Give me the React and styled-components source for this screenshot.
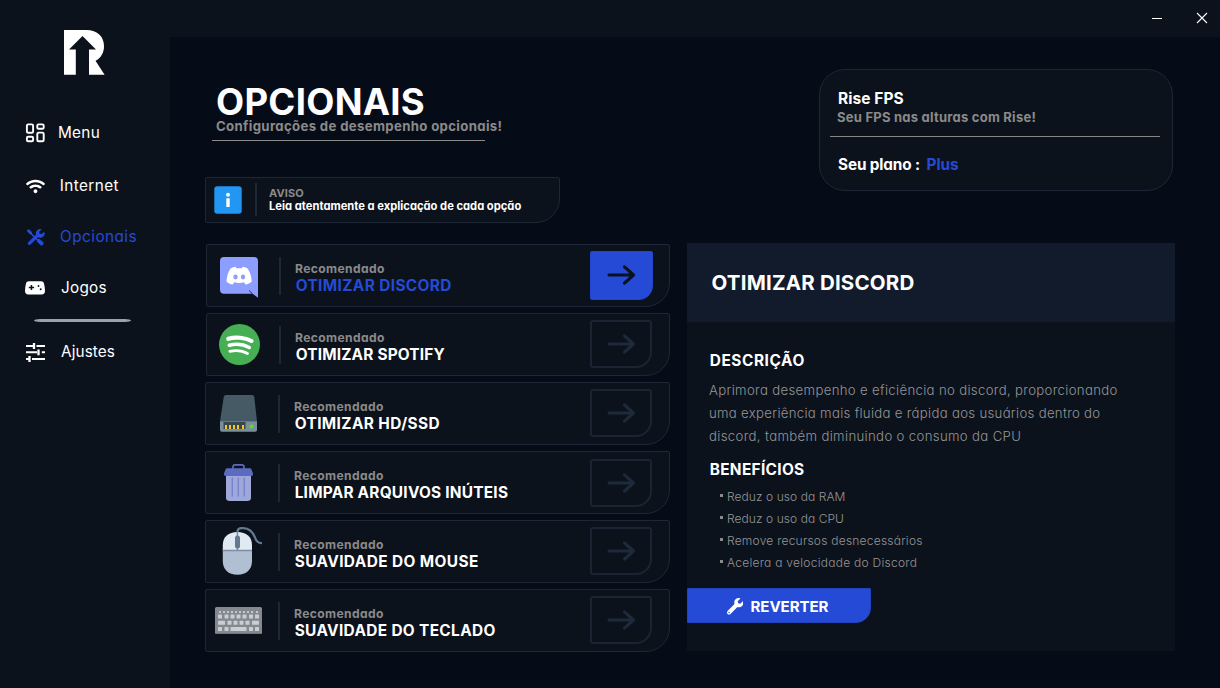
import React from 'react';
import styled, { createGlobalStyle, css } from 'styled-components';
import { FaWifi, FaWrench } from 'react-icons/fa';

const color = {
  page: '#060c17',
  panel: '#0c121c',
  header: '#121b2b',
  line: '#1d2736',
  blue: '#254ad6',
  grey: '#8a8a8a',
  soft: '#949596',
  white: '#ffffff',
};

const GlobalStyle = createGlobalStyle`
  * { box-sizing: border-box; }
  html, body { margin: 0; height: 100%; overflow: hidden; }
  body {
    background: ${color.page};
    color: ${color.white};
    font-family: Inter, "Open Sans", sans-serif;
    font-feature-settings: 'cv11';
  }
  svg { display: block; flex: none; }
`;

const Text = styled.div`
  font-size: ${(p) => p.$size}px;
  line-height: ${(p) => p.$lh}px;
  font-weight: ${(p) => p.$weight ?? 700};
  letter-spacing: ${(p) => p.$ls ?? 0}px;
  color: ${(p) => color[p.$color ?? 'white']};
  white-space: nowrap;
`;

const Window = styled.div`
  display: grid;
  grid-template-columns: 170px 1fr;
  width: 1220px;
  height: 688px;
`;

/* Sidebar */
const Sidebar = styled.nav`
  display: flex;
  flex-direction: column;
  background: ${color.panel};
`;

const Logo = styled.svg`
  margin: 30px 0 0 64px;
`;

const NavItem = styled.a`
  display: flex;
  align-items: center;
  height: 20px;
  margin-top: ${(p) => p.$gap}px;
  padding-left: 25px;
  color: ${(p) => (p.$active ? color.blue : color.white)};
`;

const NavIcon = styled.span`
  display: flex;
  width: 20px;
  justify-content: center;
`;

const NavLabel = styled.span`
  margin-left: ${(p) => p.$indent}px;
  font-size: 15.3px;
  line-height: 20px;
  letter-spacing: ${(p) => p.$ls}px;
`;

const NavDivider = styled.hr`
  width: 97px;
  height: 3.5px;
  margin: 20.5px 0 0 34px;
  border: 0;
  border-radius: 8px / 2px;
  background: #9aa1af;
`;

/* Content */
const Content = styled.div`
  display: flex;
  flex-direction: column;
`;

const TitleBar = styled.header`
  display: flex;
  justify-content: flex-end;
  align-items: center;
  gap: 33px;
  height: 37px;
  padding: 0 12px 2px 0;
  background: ${color.panel};
`;

const Main = styled.main`
  display: flex;
  justify-content: space-between;
  padding: 0 45px 0 35px;
`;

const LeftColumn = styled.section`
  display: flex;
  flex-direction: column;
  width: 465px;
  padding-top: 48px;
`;

const RightColumn = styled.section`
  display: flex;
  flex-direction: column;
  width: 488px;
  padding-top: 32px;
`;

const Heading = styled.div`
  padding-left: 11px;
`;

const PageTitle = styled(Text)`
  margin: 0;
`;

const HeadingRule = styled.hr`
  width: 273px;
  height: 1px;
  margin: 6px 0 0 7px;
  border: 0;
  background: #8b8b88;
`;

const Notice = styled.div`
  display: flex;
  width: 355px;
  height: 46px;
  margin-top: 36px;
  padding-left: 8px;
  background: ${color.panel};
  border: 1px solid ${color.line};
  border-radius: 2px 2px 24px 2px;
`;

const NoticeIcon = styled.svg`
  margin-top: 8px;
`;

const Separator = styled.span`
  flex: none;
  width: 2px;
  height: ${(p) => p.$height}px;
  margin: ${(p) => p.$top}px 0 0 13px;
  background: ${color.line};
`;

const NoticeText = styled.div`
  padding: 9px 0 0 12px;
`;

const OptionList = styled.div`
  display: flex;
  flex-direction: column;
  align-items: flex-end;
  gap: 6px;
  margin-top: 21px;
`;

const OptionCard = styled.div`
  display: flex;
  width: ${(p) => p.$width}px;
  height: 63px;
  padding: 0 16px 0 3px;
  background: ${color.panel};
  border: 1px solid ${color.line};
  border-radius: 2px 2px 24px 2px;
`;

const OptionText = styled.div`
  flex: 1;
  padding: 16px 0 0 14px;
`;

const OptionTitle = styled(Text)`
  padding-left: 0.7px;
`;

const ArrowButton = styled.button`
  display: grid;
  place-items: center;
  flex: none;
  width: 62px;
  height: 48px;
  margin: ${(p) => p.$top}px 1px 0 0;
  padding: 0;
  border: 2px solid #1a2433;
  border-radius: 3px 3px 16px 3px;
  background: transparent;
  color: #1e293a;
  ${(p) =>
    p.$active &&
    css`
      height: 49px;
      width: 63px;
      margin-right: 0;
      padding: 0 1px 1px 0;
      border: 1px solid #2246cc;
      border-radius: 2px 2px 14px 2px;
      background: ${color.blue};
      color: #0a1120;
    `}
`;

const PlanCard = styled.div`
  width: 354px;
  height: 122px;
  margin: 0 2px 0 auto;
  padding: 20px 12px 0 10px;
  background: ${color.panel};
  border: 1px solid ${color.line};
  border-radius: 26px;
`;

const PlanLine = styled.div`
  display: flex;
  gap: ${(p) => p.$gap ?? 0}px;
  padding: ${(p) => p.$top ?? 0}px 0 0 ${(p) => p.$left}px;
`;

const PlanRule = styled.hr`
  height: 1px;
  margin: 11px 0 0;
  border: 0;
  background: #858685;
`;

const Detail = styled.article`
  height: 408px;
  margin-top: 52px;
  background: ${color.panel};
`;

const DetailHeader = styled.header`
  height: 79px;
  padding: 28px 0 0 24.5px;
  background: ${color.header};
`;

const DetailBody = styled.div`
  padding: 30px 0 0 22px;
`;

const SectionTitle = styled(Text)`
  padding-left: 0.7px;
`;

const Paragraph = styled.div`
  margin: 9px 0 13px;
`;

const Benefits = styled.div`
  margin-top: 7px;
  padding-left: 11px;
`;

const Benefit = styled.div`
  display: flex;
  gap: 4px;
`;

const Bullet = styled.i`
  width: 3px;
  height: 3px;
  margin-top: 8px;
  background: ${color.grey};
`;

const RevertButton = styled.button`
  display: flex;
  align-items: center;
  gap: 7.5px;
  width: 184px;
  height: 35px;
  margin-top: 14px;
  padding: 2px 0 0 38.5px;
  border: 1px solid #2143bf;
  border-radius: 1px 1px 15px 1px;
  background: ${color.blue};
  color: ${color.white};
  font-family: inherit;
  font-feature-settings: inherit;
`;

/* Drawings */
const DashboardIcon = () => (
  <svg width="20" height="20" viewBox="25 123.5 20 20" fill="none" stroke="currentColor" strokeWidth="1.9">
    <rect x="26.9" y="124.9" width="6.2" height="8.4" rx="1.3" />
    <rect x="37.3" y="124.9" width="6.4" height="4.3" rx="1.3" />
    <rect x="26.9" y="137.2" width="6.2" height="4.6" rx="1.3" />
    <rect x="37.3" y="133.1" width="6.4" height="8.7" rx="1.3" />
  </svg>
);

const ToolsIcon = () => (
  <svg width="20" height="20" viewBox="25.5 227 20 20" fill="none" stroke="currentColor" strokeLinecap="round">
    <path strokeWidth="3" d="M29 230.800 31 232.800" />
    <path strokeWidth="1.700" d="M31 233 38 240" />
    <path strokeWidth="3.800" d="M39.300 240.800 42.200 243.500" />
    <path strokeWidth="3.200" d="M29.900 243.400 38.500 235" />
    <path
      fill="currentColor"
      stroke="none"
      d="M42.300 229.400A4.300 4.300 0 0 0 36.600 234.800L38.800 237.300A4.300 4.300 0 0 0 44.700 231.700L42.300 234 40 233.700 39.800 231.600Z"
    />
  </svg>
);

const GamepadIcon = () => (
  <svg width="20" height="14" viewBox="0 0 20 14">
    <path
      fill="currentColor"
      fillRule="evenodd"
      d="M4 .2H16C17.6.2 18.6 1 19 2.500 19.6 5 20 7.500 20 10.300 20 12.300 18.600 13.500 16.800 13.500H3.200C1.400 13.500 0 12.300 0 10.300 0 7.500.400 5 1 2.500 1.400 1 2.400.200 4 .200ZM5.700 3.900V5.800H3.800V7.200H5.700V9.100H7.200V7.200H9.100V5.800H7.200V3.900Z"
    />
    <circle cx="13.500" cy="5" r="0.9" fill={color.panel} />
    <circle cx="15.700" cy="8.300" r="1" fill={color.panel} />
  </svg>
);

const SlidersIcon = () => (
  <svg width="20" height="20" viewBox="25 342 20 20" stroke="currentColor" strokeWidth="2">
    <path d="M26 346H33.500M36.500 346H45M26 352.300H37M41.800 352.300H45M26 359H29M32 359H45" />
    <path strokeWidth="2.300" d="M34 343V349M38.500 349.500V355.200M29.500 356V362" />
  </svg>
);

const ArrowIcon = () => (
  <svg width="30" height="22" viewBox="0 0 30 22" fill="none" stroke="currentColor" strokeWidth="3.100" strokeLinecap="round" strokeLinejoin="round">
    <path d="M3 11H27.500M18.500 2.800 27.500 11 18.500 19.200" />
  </svg>
);

const DiscordArt = () => (
  <>
    <path fill="#8c9eff" d="M224 257H254Q258 257 258 261V297.800L252.500 293.700H224Q220 293.700 220 289.700V261Q220 257 224 257Z" />
    <path stroke={color.panel} strokeWidth="0.800" d="M249 290.500 252.500 293.800" />
    <path
      fill="#fff"
      d="M230.600 268.500C232.300 267.600 234 267 235.600 266.800L236.400 268.300H241.800L242.600 266.800C244.200 267 245.900 267.600 247.600 268.500 250.200 272.500 251.600 277 251.700 281.500 250 283.300 247.800 284.300 245.500 284.600L244 282.300C240.800 283.100 237.400 283.100 234.200 282.300L232.700 284.600C230.400 284.300 228.200 283.300 226.500 281.500 226.600 277 228 272.500 230.600 268.500Z"
    />
    <ellipse cx="235.500" cy="277" rx="2.200" ry="2.400" fill="#8c9eff" />
    <ellipse cx="243" cy="277" rx="2.200" ry="2.400" fill="#8c9eff" />
  </>
);

const SpotifyArt = () => (
  <>
    <circle cx="239.500" cy="344.500" r="20.500" fill="#46ae53" />
    <g fill="none" stroke="#fff" strokeLinecap="round">
      <path strokeWidth="4.200" d="M228.300 338.800C235 336.800 245 337.300 251.500 341" />
      <path strokeWidth="3.600" d="M229.300 345.200C236 343.500 243.500 344.300 249.300 347.500" />
      <path strokeWidth="2.800" d="M229.800 351.300C236 350 242.500 350.500 247.500 353.500" />
    </g>
  </>
);

const DriveArt = () => (
  <>
    <path fill="#455a64" d="M226 395H252Q254 395 254.300 397L257 421.500H220L223.700 397Q224 395 226 395Z" />
    <path fill="#78909c" d="M220 421.300H257V430Q257 431.800 255.200 431.800H221.800Q220 431.800 220 430Z" />
    <rect x="223.500" y="422" width="22" height="7" fill="#37474f" />
    <path stroke="#fcc51f" strokeWidth="2" d="M226 425V429M230 425V429M234 425V429M238 425V429M243 425V429" />
    <circle cx="251.600" cy="426.600" r="2" fill="#64dd17" />
  </>
);

const TrashArt = () => (
  <>
    <path fill="none" stroke="#5c6bc0" strokeWidth="1.700" d="M233 469.500V467Q233 464.800 235.200 464.800H241.800Q244 464.800 244 467V469.500" />
    <path fill="#9fa8da" d="M226 474H251V498Q251 501 247 501H230Q226 501 226 498Z" />
    <path fill="#5c6bc0" d="M227 468.300H250Q251.500 468.300 251.700 470L253 473.500Q253.300 476 251 476H226Q223.700 476 224 473.500L225.300 470Q225.500 468.300 227 468.300Z" />
    <path stroke="#7986cb" strokeWidth="1.500" strokeLinecap="round" d="M232.300 478V496M238.300 478V496M244.300 478V496" />
  </>
);

const MouseArt = () => (
  <>
    <path fill="none" stroke="#64788f" strokeWidth="2.200" d="M237.500 538V531Q238 528.500 241.500 528.200C248 527.500 252.500 531 255 537.500 256.500 542 258.500 543.300 262 543" />
    <path fill="#b0bfd2" d="M222.800 549H252V561C252 569.500 246.500 574.800 237.400 574.800S222.800 569.500 222.800 561Z" />
    <path fill="#e1eaf2" d="M222.800 550V545C222.800 537 228.500 532 237.400 532S252 537 252 545V550Z" />
    <path stroke="#7d8ea3" strokeWidth="1.600" d="M222.800 550.500H252M237.400 532V550" />
    <rect x="235" y="535.500" width="5" height="13" rx="2.500" fill="#64788f" />
  </>
);

const keyRows = [
  { y: 611, h: 2, keys: [[219, 2], [223, 2], [227, 2], [231, 2], [235, 2], [239, 2], [243, 2], [247, 2], [251, 2], [256, 2]] },
  { y: 614.5, h: 4, keys: [[218, 4], [224.5, 4], [230.5, 4], [236.500, 4], [242.500, 4], [249, 4], [255, 4]] },
  { y: 620.7, h: 4, keys: [[218, 7], [227.500, 4], [233.500, 4], [239.500, 4], [245.500, 4], [252, 7]] },
  { y: 627, h: 4, keys: [[218, 4], [224.500, 4], [230.500, 16], [249, 4], [255, 4]] },
];

const KeyboardArt = () => (
  <>
    <rect x="215" y="607" width="47" height="27" rx="1.500" fill="#84898f" />
    <path stroke="#71767b" strokeWidth="1" d="M215.500 633.500H261.500" />
    {keyRows.map((row) =>
      row.keys.map(([x, w]) => (
        <rect key={`${row.y}-${x}`} x={x} y={row.y} width={w} height={row.h} rx="0.500" fill="#c9ced2" />
      ))
    )}
  </>
);

const navigation = [
  { label: 'Menu', gap: 48, indent: 13, ls: 0.3, icon: <DashboardIcon /> },
  { label: 'Internet', gap: 33, indent: 14.8, ls: 0.4, icon: <FaWifi size={19} /> },
  { label: 'Opcionais', gap: 31, indent: 15, ls: 0.47, icon: <ToolsIcon />, active: true },
  { label: 'Jogos', gap: 31, indent: 16, ls: 0.27, icon: <GamepadIcon /> },
];

const options = [
  { title: 'OTIMIZAR DISCORD', ls: 0.38, Art: DiscordArt, active: true },
  { title: 'OTIMIZAR SPOTIFY', ls: 0.18, Art: SpotifyArt },
  { title: 'OTIMIZAR HD/SSD', ls: 0.4, Art: DriveArt },
  { title: 'LIMPAR ARQUIVOS INÚTEIS', ls: 0.23, Art: TrashArt },
  { title: 'SUAVIDADE DO MOUSE', ls: 0.41, Art: MouseArt },
  { title: 'SUAVIDADE DO TECLADO', ls: 0.35, Art: KeyboardArt },
];

const description = [
  ['Aprimora desempenho e eficiência no discord, proporcionando', 0.33],
  ['uma experiência mais fluida e rápida aos usuários dentro do', 0.3],
  ['discord, também diminuindo o consumo da CPU', 0.34],
];

const benefits = [
  ['Reduz o uso da RAM', 0.07],
  ['Reduz o uso da CPU', 0.07],
  ['Remove recursos desnecessários', 0.23],
  ['Acelera a velocidade do Discord', 0.26],
];

function NavEntry({ label, gap, indent, ls, icon, active }) {
  return (
    <NavItem $gap={gap} $active={active}>
      <NavIcon>{icon}</NavIcon>
      <NavLabel $indent={indent} $ls={ls}>{label}</NavLabel>
    </NavItem>
  );
}

function Option({ option, index }) {
  const { title, ls, Art, active } = option;
  const wide = index > 1;
  return (
    <OptionCard $width={wide ? 465 : 464}>
      <svg width="56" height="61" viewBox={`${wide ? 209 : 210} ${245 + index * 69} 56 61`}>
        <Art />
      </svg>
      <Separator $height={38} $top={12} />
      <OptionText>
        <Text $size={12.1} $lh={16} $ls={0.38} $color="grey">Recomendado</Text>
        <OptionTitle $size={15.4} $lh={17} $ls={ls} $color={active ? 'blue' : 'white'}>{title}</OptionTitle>
      </OptionText>
      <ArrowButton $active={active} $top={index === 3 ? 7 : 6}>
        <ArrowIcon />
      </ArrowButton>
    </OptionCard>
  );
}

export default function App() {
  return (
    <>
      <GlobalStyle />
      <Window>
        <Sidebar>
          <Logo width="41" height="45" viewBox="64 30 41 45">
            <path
              fill="#fff"
              d="M64 30H86C98 30 104 37 104 46.500 104 52.500 101 58 95.500 60.800L104.600 74.700H89V49.600H96L82.500 36 69 49.600H75.800V74.700H64Z"
            />
          </Logo>
          {navigation.map((item) => (
            <NavEntry key={item.label} {...item} />
          ))}
          <NavDivider />
          <NavEntry label="Ajustes" gap={20} indent={16} ls={0.12} icon={<SlidersIcon />} />
        </Sidebar>
        <Content>
          <TitleBar>
            <svg width="12" height="12" viewBox="0 0 12 12" stroke="#fff">
              <path d="M1 6.500H11" />
            </svg>
            <svg width="12" height="12" viewBox="0 0 12 12" stroke="#fff" strokeWidth="1.100">
              <path d="M1 1 11 11M11 1 1 11" />
            </svg>
          </TitleBar>
          <Main>
            <LeftColumn>
              <Heading>
                <PageTitle as="h1" $size={36.5} $lh={34} $ls={0.3}>OPCIONAIS</PageTitle>
                <Text $size={13.2} $lh={15} $ls={0.34} $color="grey">Configurações de desempenho opcionais!</Text>
              </Heading>
              <HeadingRule />
              <Notice>
                <NoticeIcon width="28" height="28" viewBox="0 0 28 28">
                  <rect x="0.300" y="0.300" width="27.400" height="27.400" rx="3" fill="#2196f3" />
                  <circle cx="14" cy="8.800" r="2" fill="#fff" />
                  <rect x="12.300" y="12.300" width="3.400" height="8.700" fill="#fff" />
                </NoticeIcon>
                <Separator $height={33} $top={5} />
                <NoticeText>
                  <Text $size={11} $lh={13} $ls={0.1} $color="grey">AVISO</Text>
                  <Text $size={11.2} $lh={13} $ls={0}>Leia atentamente a explicação de cada opção</Text>
                </NoticeText>
              </Notice>
              <OptionList>
                {options.map((option, index) => (
                  <Option key={option.title} option={option} index={index} />
                ))}
              </OptionList>
            </LeftColumn>
            <RightColumn>
              <PlanCard>
                <PlanLine $left={8}>
                  <Text $size={15.5} $lh={18} $ls={0.07}>Rise FPS</Text>
                </PlanLine>
                <PlanLine $left={7} $top={1}>
                  <Text $size={13} $lh={16} $ls={0.24} $color="grey">Seu FPS nas alturas com Rise!</Text>
                </PlanLine>
                <PlanRule />
                <PlanLine $left={8} $top={19} $gap={6.5}>
                  <Text $size={15.3} $lh={18} $ls={-0.12}>Seu plano :</Text>
                  <Text $size={15.3} $lh={18} $ls={0} $color="blue">Plus</Text>
                </PlanLine>
              </PlanCard>
              <Detail>
                <DetailHeader>
                  <Text $size={20.5} $lh={24} $ls={0.19}>OTIMIZAR DISCORD</Text>
                </DetailHeader>
                <DetailBody>
                  <SectionTitle $size={15.4} $lh={18} $ls={0.58}>DESCRIÇÃO</SectionTitle>
                  <Paragraph>
                    {description.map(([line, ls]) => (
                      <Text key={line} $size={13.2} $lh={23} $weight={300} $ls={ls} $color="soft">{line}</Text>
                    ))}
                  </Paragraph>
                  <SectionTitle $size={15.4} $lh={18} $ls={0.32}>BENEFÍCIOS</SectionTitle>
                  <Benefits>
                    {benefits.map(([line, ls]) => (
                      <Benefit key={line}>
                        <Bullet />
                        <Text $size={12} $lh={22} $weight={300} $ls={ls} $color="soft">{line}</Text>
                      </Benefit>
                    ))}
                  </Benefits>
                </DetailBody>
                <RevertButton>
                  <FaWrench size={16.5} />
                  <Text $size={15.1} $lh={18} $ls={-0.08}>REVERTER</Text>
                </RevertButton>
              </Detail>
            </RightColumn>
          </Main>
        </Content>
      </Window>
    </>
  );
}
